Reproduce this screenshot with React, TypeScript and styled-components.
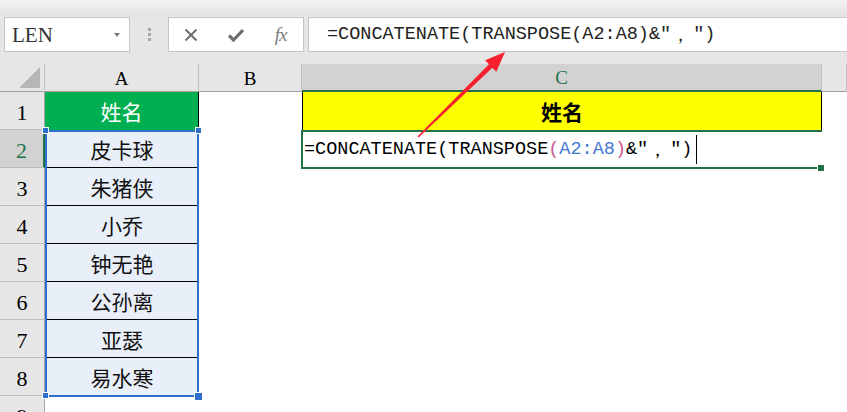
import React from 'react';
import styled, { createGlobalStyle } from 'styled-components';

const GlobalStyle = createGlobalStyle`
  html, body {
    margin: 0;
    padding: 0;
    background: #fff;
    overflow: hidden;
  }
  body {
    font-family: "Liberation Serif", "Noto Sans CJK SC", serif;
  }
`;

const Screen = styled.div`
  position: relative;
  width: 847px;
  height: 412px;
  overflow: hidden;
  background: #fff;
`;

const Ribbon = styled.div`
  display: flex;
  align-items: flex-start;
  height: 64px;
  box-sizing: border-box;
  padding: 17px 0 0 4px;
  background: linear-gradient(#f3f3f3 0, #e3e3e3 14px, #e6e6e6 17px);
`;

const NameBox = styled.div`
  position: relative;
  display: flex;
  align-items: center;
  width: 126px;
  height: 35px;
  box-sizing: border-box;
  padding: 2px 0 0 7px;
  background: #fff;
  border: 1px solid #c6c6c6;
  font-family: "Liberation Serif", serif;
  font-size: 21px;
  color: #333;
`;

const Caret = styled.span`
  position: absolute;
  right: 9px;
  top: 15px;
  width: 0;
  height: 0;
  border-left: 3.5px solid transparent;
  border-right: 3.5px solid transparent;
  border-top: 4px solid #7a7a7a;
`;

const Grip = styled.div`
  width: 38px;
  height: 35px;
  display: flex;
  flex-direction: column;
  align-items: center;
  justify-content: center;
  gap: 2px;
`;

const GripDot = styled.span`
  width: 3px;
  height: 3px;
  background: #a8a8a8;
`;

const ActionBox = styled.div`
  display: grid;
  grid-template-columns: repeat(3, 1fr);
  align-items: center;
  justify-items: center;
  width: 136px;
  height: 35px;
  box-sizing: border-box;
  margin-right: 4px;
  background: #fff;
  border: 1px solid #c6c6c6;
`;

const FxLabel = styled.span`
  font-family: "Liberation Serif", serif;
  font-style: italic;
  font-size: 19px;
  color: #7a7a7a;
  letter-spacing: -1px;
`;

const FormulaBox = styled.div`
  flex: 1;
  display: flex;
  align-items: center;
  height: 35px;
  box-sizing: border-box;
  padding-left: 18px;
  margin-right: -4px;
  background: #fff;
  border: 1px solid #c6c6c6;
  font-family: "Liberation Mono", monospace;
  font-size: 18.5px;
  color: #222;
  white-space: pre;
`;

const Sheet = styled.div`
  display: grid;
  grid-template-columns: 45px 154px 103px 520px 1fr;
  grid-template-rows: 28px;
  grid-auto-rows: 38px;
`;

const Corner = styled.div`
  position: relative;
  background: #e6e6e6;
  border-right: 1px solid #bfbfbf;
  border-bottom: 1px solid #9f9f9f;
  &::after {
    content: '';
    position: absolute;
    right: 4px;
    bottom: 3px;
    width: 21px;
    height: 21px;
    background: #b6b6b6;
    clip-path: polygon(100% 0, 100% 100%, 0 100%);
  }
`;

const ColHead = styled.div<{ $active?: boolean }>`
  display: flex;
  align-items: center;
  justify-content: center;
  box-sizing: border-box;
  padding-top: 2px;
  background: ${({ $active }) => ($active ? '#d2d2d2' : '#e6e6e6')};
  color: ${({ $active }) => ($active ? '#217346' : '#000')};
  border-right: 1px solid #bfbfbf;
  border-bottom: ${({ $active }) => ($active ? '2px solid #217346' : '1px solid #9f9f9f')};
  font-family: "Liberation Serif", serif;
  font-size: 19px;
`;

const RowHead = styled.div<{ $active?: boolean }>`
  grid-column: 1;
  display: flex;
  align-items: center;
  justify-content: center;
  box-sizing: border-box;
  padding-top: 4px;
  background: ${({ $active }) => ($active ? '#d2d2d2' : '#e6e6e6')};
  color: ${({ $active }) => ($active ? '#217346' : '#000')};
  border-right: ${({ $active }) => ($active ? '2px solid #217346' : '1px solid #a6a6a6')};
  border-bottom: 1px solid #bdbdbd;
  font-family: "Liberation Serif", serif;
  font-size: 22px;
`;

const Blank = styled.div``;

const HeadCell = styled.div<{ $fill: string; $ink: string; $bold?: boolean }>`
  display: flex;
  align-items: center;
  justify-content: center;
  box-sizing: border-box;
  background: ${({ $fill }) => $fill};
  color: ${({ $ink }) => $ink};
  font-family: "Noto Sans CJK SC", sans-serif;
  font-size: 21px;
  font-weight: ${({ $bold }) => ($bold ? 700 : 400)};
  border-right: 1px solid #000;
`;

const TitleCell = styled(HeadCell)`
  border-left: 1px solid #000;
`;

const SelectionRange = styled.div`
  grid-column: 2;
  grid-row: 3 / span 7;
  position: relative;
  display: flex;
  flex-direction: column;
  background: #e9eff8;
  &::before {
    content: '';
    position: absolute;
    inset: 0 0 -1px 0;
    border: 2px solid #2f6fcb;
    pointer-events: none;
  }
`;

const NameCell = styled.div`
  height: 38px;
  flex: none;
  display: flex;
  align-items: center;
  justify-content: center;
  box-sizing: border-box;
  border-bottom: 1px solid #000;
  font-family: "Noto Sans CJK SC", sans-serif;
  font-size: 21px;
  color: #111;
  &:last-child {
    border-bottom: none;
  }
`;

const Handle = styled.span<{ $x: 'left' | 'right'; $y: 'top' | 'bottom'; $big?: boolean }>`
  position: absolute;
  ${({ $x, $big }) => `${$x}: ${$big ? -4 : -3}px;`}
  ${({ $y, $big }) => `${$y}: ${$big ? -5 : -3}px;`}
  width: ${({ $big }) => ($big ? 7 : 5)}px;
  height: ${({ $big }) => ($big ? 7 : 5)}px;
  background: #2f6fcb;
  border: 1px solid #fff;
  z-index: 2;
`;

const EditCell = styled.div`
  position: relative;
  display: flex;
  align-items: center;
  box-sizing: border-box;
  padding-left: 1px;
  border-left: 2px solid #217346;
  border-top: 2px solid #217346;
  border-bottom: 2px solid #217346;
  margin-left: -1px;
  margin-bottom: -1px;
  font-family: "Liberation Mono", monospace;
  font-size: 18.5px;
  color: #000;
  white-space: pre;
`;

const FillHandle = styled.span`
  position: absolute;
  right: -3px;
  bottom: -5px;
  width: 6px;
  height: 6px;
  background: #217346;
  border: 1px solid #fff;
`;

const Ref = styled.span<{ $tone: 'paren' | 'range' }>`
  color: ${({ $tone }) => ($tone === 'paren' ? '#c8578f' : '#4479d4')};
`;

const Wide = styled.span`
  display: inline-block;
  width: 22px;
`;

const TextCursor = styled.span`
  display: inline-block;
  width: 1px;
  height: 29px;
  margin-left: 4px;
  background: #000;
`;

const ArrowLayer = styled.svg`
  position: absolute;
  left: 0;
  top: 0;
  pointer-events: none;
`;

const names = ['皮卡球', '朱猪侠', '小乔', '钟无艳', '公孙离', '亚瑟', '易水寒'];

const App: React.FC = () => {
  return (
    <Screen>
      <GlobalStyle />
      <Ribbon>
        <NameBox>
          LEN
          <Caret />
        </NameBox>
        <Grip>
          <GripDot />
          <GripDot />
          <GripDot />
        </Grip>
        <ActionBox>
          <svg width="14" height="14" viewBox="0 0 14 14">
            <path d="M1.5 1.5 L12.5 12.5 M12.5 1.5 L1.5 12.5" stroke="#6e6e6e" strokeWidth="2" fill="none" />
          </svg>
          <svg width="16" height="14" viewBox="0 0 16 14">
            <path d="M1 7.5 L5.5 12 L15 2" stroke="#6e6e6e" strokeWidth="3.2" fill="none" strokeLinejoin="miter" />
          </svg>
          <FxLabel>fx</FxLabel>
        </ActionBox>
        <FormulaBox>
          =CONCATENATE(TRANSPOSE(A2:A8)&"<Wide>，</Wide>")
        </FormulaBox>
      </Ribbon>

      <Sheet>
        <Corner />
        <ColHead>A</ColHead>
        <ColHead>B</ColHead>
        <ColHead $active>C</ColHead>
        <ColHead />

        <RowHead>1</RowHead>
        <HeadCell $fill="#00b050" $ink="#fff">姓名</HeadCell>
        <Blank />
        <TitleCell $fill="#ffff00" $ink="#000" $bold>姓名</TitleCell>
        <Blank />

        <RowHead $active>2</RowHead>
        <SelectionRange>
          {names.map((n) => (
            <NameCell key={n}>{n}</NameCell>
          ))}
          <Handle $x="left" $y="top" />
          <Handle $x="right" $y="top" />
          <Handle $x="left" $y="bottom" />
          <Handle $x="right" $y="bottom" $big />
        </SelectionRange>
        <Blank />
        <EditCell>
          =CONCATENATE(TRANSPOSE<Ref $tone="paren">(</Ref>
          <Ref $tone="range">A2:A8</Ref>
          <Ref $tone="paren">)</Ref>&"<Wide>，</Wide>")
          <TextCursor />
          <FillHandle />
        </EditCell>
        <Blank />

        {[3, 4, 5, 6, 7, 8, 9].map((r) => (
          <React.Fragment key={r}>
            <RowHead>{r}</RowHead>
            <Blank />
            <Blank />
            <Blank />
          </React.Fragment>
        ))}
      </Sheet>

      <ArrowLayer width="847" height="412" viewBox="0 0 847 412">
        <polygon
          points="417.4,136.4 489.0,64.2 485.1,60.3 505,52 496.3,71.7 492.4,67.8 418.6,137.6"
          fill="#f5222d"
        />
      </ArrowLayer>
    </Screen>
  );
};

export default App;
